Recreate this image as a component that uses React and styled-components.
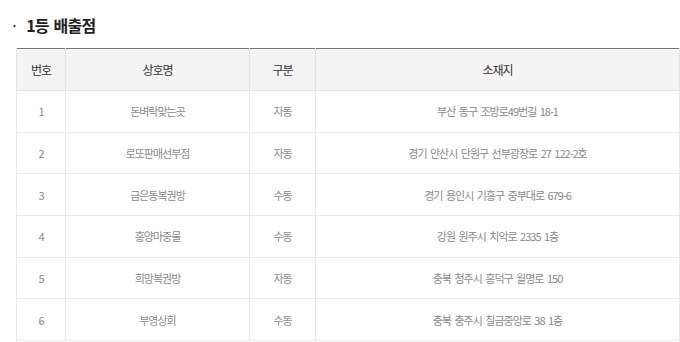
import React from "react";
import styled, { createGlobalStyle } from "styled-components";

const Global = createGlobalStyle`
  html, body { margin: 0; padding: 0; background: #fff; }
  body { font-family: "Noto Sans CJK KR", "Noto Sans", sans-serif; }
`;

const Page = styled.div`
  width: 680px;
  padding-top: 15px;
`;

const Title = styled.h3`
  margin: 0 0 12px 0;
  padding-left: 10px;
  display: flex;
  align-items: center;
  gap: 8px;
  font-size: 16px;
  line-height: 21px;
  font-weight: 700;
  color: #222;
  letter-spacing: -0.8px;
  word-spacing: 2px;
`;

const Dot = styled.span`
  font-weight: 400;
  color: #333;
`;

const Table = styled.table`
  margin-left: 16px;
  width: 664px;
  border-collapse: collapse;
  table-layout: fixed;
  border-top: 1px solid #777;
`;

const Th = styled.th`
  height: 41px;
  padding: 0;
  background: #f4f4f4;
  border: 1px solid #e4e4e4;
  border-top: none;
  font-size: 12px;
  font-weight: 400;
  color: #333;
  letter-spacing: -1px;
  text-align: center;
  vertical-align: middle;
`;

const Td = styled.td`
  height: 40.67px;
  padding: 0;
  border: 1px solid #e9e9e9;
  font-size: 11px;
  font-weight: 400;
  color: #8a8a8a;
  letter-spacing: -1px;
  word-spacing: 2px;
  text-align: center;
  vertical-align: middle;
`;

const rows = [
  ["1", "돈벼락맞는곳", "자동", "부산 동구 조방로49번길 18-1"],
  ["2", "로또판매선부점", "자동", "경기 안산시 단원구 선부광장로 27 122-2호"],
  ["3", "금은동복권방", "수동", "경기 용인시 기흥구 중부대로 679-6"],
  ["4", "흥양마중물", "수동", "강원 원주시 치악로 2335 1층"],
  ["5", "희망복권방", "자동", "충북 청주시 흥덕구 월명로 150"],
  ["6", "부영상회", "수동", "충북 충주시 칠금중앙로 38 1층"],
];

export default function App() {
  return (
    <Page>
      <Global />
      <Title>
        <Dot>·</Dot>
        <span>1등 배출점</span>
      </Title>
      <Table>
        <colgroup>
          <col style={{ width: "49px" }} />
          <col style={{ width: "184px" }} />
          <col style={{ width: "66px" }} />
          <col />
        </colgroup>
        <thead>
          <tr>
            <Th>번호</Th>
            <Th>상호명</Th>
            <Th>구분</Th>
            <Th>소재지</Th>
          </tr>
        </thead>
        <tbody>
          {rows.map((r) => (
            <tr key={r[0]}>
              {r.map((c, i) => (
                <Td key={i}>{c}</Td>
              ))}
            </tr>
          ))}
        </tbody>
      </Table>
    </Page>
  );
}
